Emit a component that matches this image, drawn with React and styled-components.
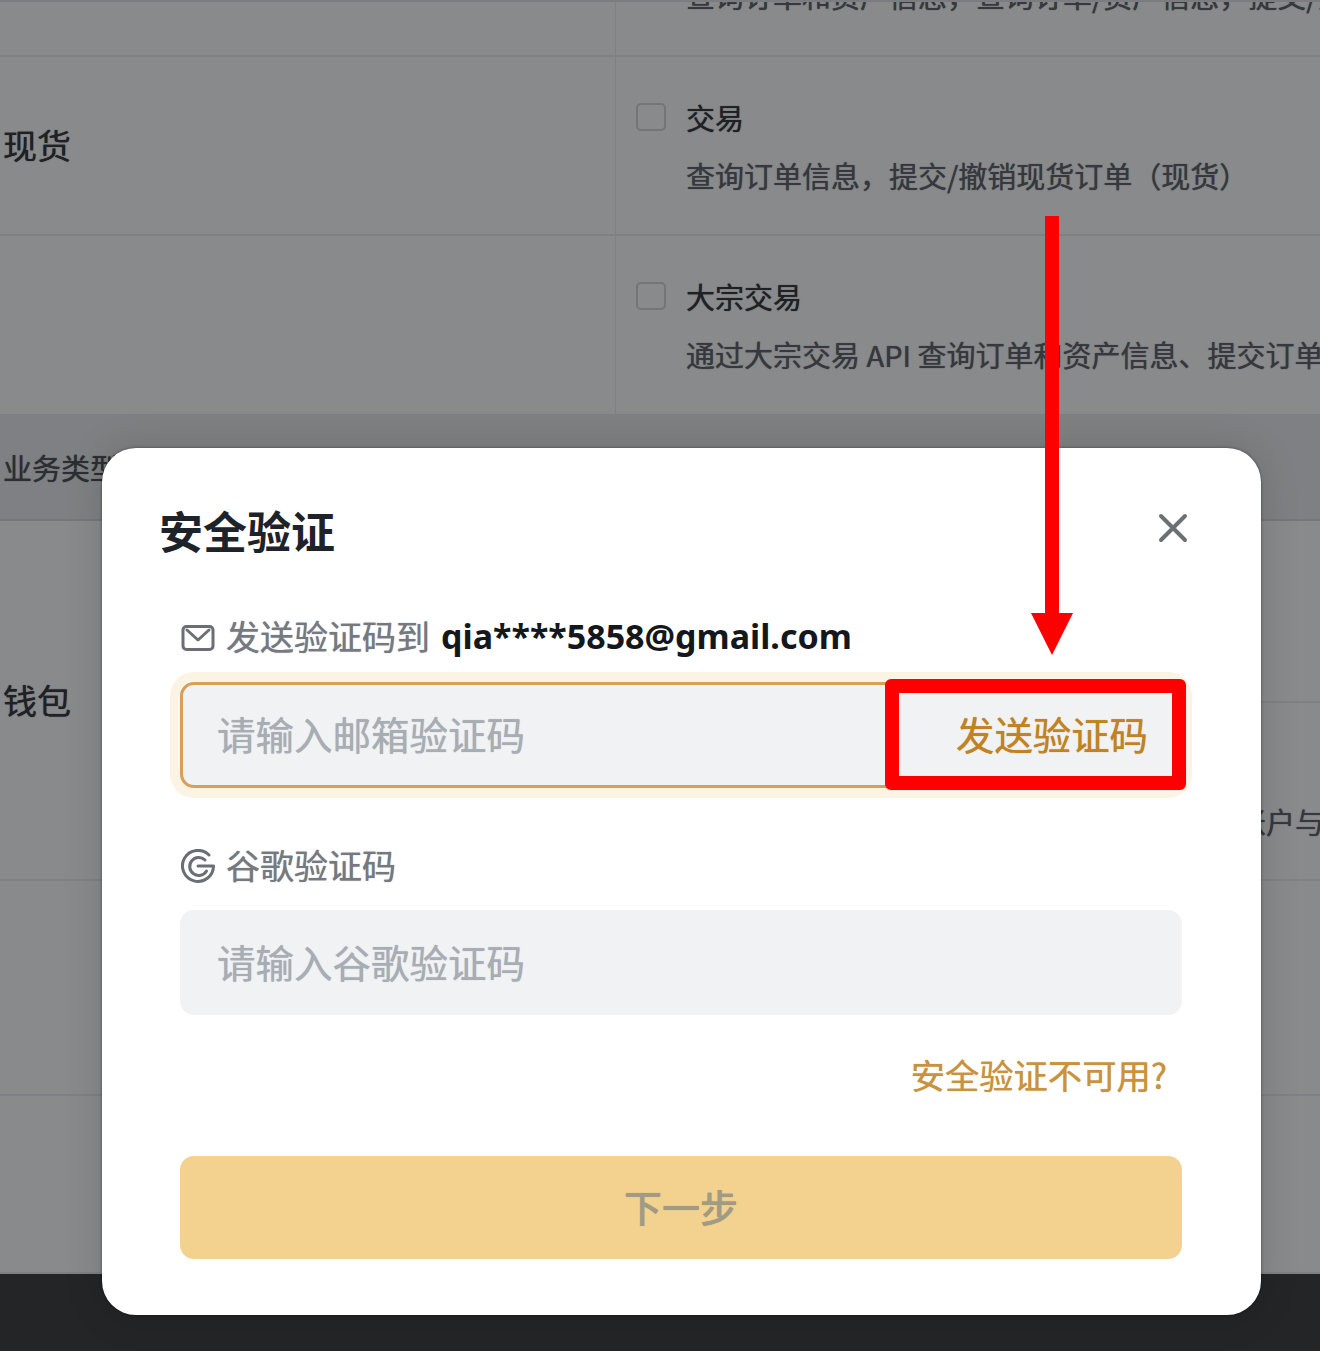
import React from "react";
import styled, { createGlobalStyle, css } from "styled-components";

const GlobalStyle = createGlobalStyle`
  html, body {
    margin: 0;
    padding: 0;
    background: #232527;
  }
  body {
    font-family: "Noto Sans CJK SC", "Noto Sans", sans-serif;
  }
  * {
    box-sizing: border-box;
  }
`;

// the source picture is an upscaled capture, so the text sits a little soft and heavy
const softText = css`
  text-shadow: 0 0 1px currentColor;
`;

const Stage = styled.div`
  position: relative;
  width: 1320px;
  height: 1351px;
  overflow: hidden;
`;

// page behind the dialog, already dimmed by the mask
const Table = styled.div`
  height: 1274px;
  background: #898a8c;
  border-top: 2px solid #7b7c7f;
`;

const Row = styled.div`
  display: grid;
  grid-template-columns: 615px 1fr;
  height: ${(p) => p.$height}px;
  border-bottom: 2px solid #7f8083;
  overflow: hidden;
`;

const Band = styled.div`
  display: flex;
  align-items: center;
  height: 105px;
  padding: 0 0 2px 3px;
  background: #7f8083;
  border-bottom: 2px solid #76777b;
  font-size: 29px;
  color: #2c2e32;
  ${softText}
`;

const NameCell = styled.div`
  display: flex;
  align-items: center;
  padding: 0 0 2px 3px;
  font-size: 34px;
  line-height: 1;
  color: #1f2125;
  ${softText}
`;

const ValueCell = styled.div`
  border-left: 1px solid #7f8083;
  min-width: 0;
`;

const Permission = styled.div`
  display: grid;
  grid-template-columns: 30px 1fr;
  grid-auto-rows: 58px;
  column-gap: 20px;
  height: ${(p) => p.$height || 178}px;
  padding: 31px 0 0 20px;
  & + & {
    border-top: 2px solid #7f8083;
  }
`;

const Check = styled.span`
  width: 30px;
  height: 28px;
  margin-top: 15px;
  border: 2px solid #737578;
  border-radius: 5px;
`;

const PermissionName = styled.div`
  font-size: 29px;
  line-height: 58px;
  color: #1f2125;
  white-space: nowrap;
  ${softText}
`;

const PermissionText = styled.div`
  grid-column: 2;
  font-size: 29px;
  line-height: 58px;
  color: #36383d;
  white-space: nowrap;
  ${softText}
`;

const ClippedText = styled(PermissionText)`
  margin: -36px 0 0 70px;
`;

const Footer = styled.div`
  height: 77px;
  background: #232527;
`;

const Modal = styled.div`
  position: absolute;
  left: 102px;
  top: 448px;
  width: 1159px;
  height: 867px;
  background: #fff;
  border-radius: 34px;
  box-shadow: 0 0 3px rgba(0, 0, 0, 0.45), 0 0 40px rgba(0, 0, 0, 0.14);
`;

const Header = styled.div`
  display: flex;
  align-items: center;
  justify-content: space-between;
  padding: 58px 70px 0 57px;
`;

const Title = styled.h2`
  margin: -2px 0 2px;
  font-size: 44px;
  line-height: 52px;
  font-weight: 700;
  color: #1e2329;
`;

const CloseIcon = styled.svg`
  width: 36px;
  height: 36px;
  margin-top: -8px;
  fill: none;
  stroke: #6c7075;
  stroke-width: 4;
  stroke-linecap: round;
`;

const Body = styled.div`
  padding: 56px 79px 0 78px;
`;

const FieldLabel = styled.div`
  display: flex;
  align-items: center;
  gap: 11px;
  height: 46px;
  padding-left: 1px;
  font-size: 34px;
  color: #767a80;
`;

const LabelText = styled.span`
  margin-bottom: 4px;
  ${softText}
`;

const LabelIcon = styled.svg`
  flex: none;
  width: 34px;
  height: 34px;
  fill: none;
  stroke: #6b6f75;
  stroke-width: 3;
  stroke-linecap: round;
  stroke-linejoin: round;
`;

const Email = styled.strong`
  margin-bottom: 2px;
  font-family: "Noto Sans", sans-serif;
  font-size: 34px;
  font-weight: 700;
  color: #14171b;
`;

const Field = styled.div`
  position: relative;
  display: flex;
  align-items: center;
  justify-content: space-between;
  height: ${(p) => (p.$focused ? 106 : 105)}px;
  margin: ${(p) => (p.$focused ? "22px 0 55px" : "21px 0 0")};
  padding: 0 31px 4px ${(p) => (p.$focused ? 34 : 37)}px;
  background: #f1f2f4;
  border-radius: 14px;
  border: ${(p) => (p.$focused ? "3px solid #d79f57" : "none")};
  box-shadow: ${(p) => (p.$focused ? "0 0 0 10px #fbf3e3" : "none")};
`;

const Placeholder = styled.span`
  font-size: 38.5px;
  color: #a8acb3;
  ${softText}
`;

const SendCode = styled.span`
  font-size: 38.4px;
  color: #bf8225;
  ${softText}
`;

const Callout = styled.div`
  position: absolute;
  top: -6px;
  right: -7px;
  width: 301px;
  height: 111px;
  border: 14px solid #ff0000;
  border-radius: 6px;
`;

const CalloutArrow = styled.svg`
  position: absolute;
  left: 1031px;
  top: 216px;
  width: 42px;
  height: 439px;
  fill: #ff0000;
`;

const HelpLink = styled.div`
  margin-top: 37px;
  padding: 0 15px 2px 0;
  font-size: 34.3px;
  line-height: 44px;
  text-align: right;
  color: #c8923f;
  ${softText}
`;

const NextButton = styled.button`
  display: block;
  width: 100%;
  height: 103px;
  margin-top: 58px;
  padding: 0 0 4px;
  border: none;
  border-radius: 14px;
  background: #f3d28f;
  font-family: inherit;
  font-size: 38px;
  font-weight: 500;
  color: #a19a84;
  ${softText}
`;

function MailIcon() {
  return (
    <LabelIcon viewBox="0 0 34 34">
      <rect x="2" y="6.5" width="30" height="23" rx="3.5" />
      <path d="M6 10 17 20 28 10" />
    </LabelIcon>
  );
}

function GoogleAuthIcon() {
  return (
    <LabelIcon viewBox="0 0 34 34">
      <path d="M28 6A15.5 15.5 0 1 0 32.5 17H17" />
      <path d="M24 11A9 9 0 1 0 25.5 22" />
    </LabelIcon>
  );
}

export default function App() {
  return (
    <Stage>
      <GlobalStyle />
      <Table>
        <Row $height={55}>
          <div />
          <ValueCell>
            <ClippedText>查询订单和资产信息，查询订单/资产信息，提交/撤销</ClippedText>
          </ValueCell>
        </Row>
        <Row $height={179}>
          <NameCell>现货</NameCell>
          <ValueCell>
            <Permission>
              <Check />
              <PermissionName>交易</PermissionName>
              <PermissionText>查询订单信息，提交/撤销现货订单（现货）</PermissionText>
            </Permission>
          </ValueCell>
        </Row>
        <Row $height={180}>
          <div />
          <ValueCell>
            <Permission>
              <Check />
              <PermissionName>大宗交易</PermissionName>
              <PermissionText>通过大宗交易 API 查询订单和资产信息、提交订单</PermissionText>
            </Permission>
          </ValueCell>
        </Row>
        <Band>业务类型</Band>
        <Row $height={360}>
          <NameCell>钱包</NameCell>
          <ValueCell>
            <Permission $height={180} />
            <Permission $height={180}>
              <Check />
              <PermissionName>划转</PermissionName>
              <PermissionText>查询钱包账户余额信息，提交划转至钱包子账户与</PermissionText>
            </Permission>
          </ValueCell>
        </Row>
        <Row $height={215} />
        <Row $height={178} />
      </Table>
      <Footer />

      <Modal>
        <Header>
          <Title>安全验证</Title>
          <CloseIcon viewBox="0 0 36 36">
            <path d="M6 6 30 30M30 6 6 30" />
          </CloseIcon>
        </Header>
        <Body>
          <FieldLabel>
            <MailIcon />
            <LabelText>发送验证码到</LabelText>
            <Email>qia****5858@gmail.com</Email>
          </FieldLabel>
          <Field $focused>
            <Placeholder>请输入邮箱验证码</Placeholder>
            <SendCode>发送验证码</SendCode>
            <Callout />
          </Field>
          <FieldLabel>
            <GoogleAuthIcon />
            <LabelText>谷歌验证码</LabelText>
          </FieldLabel>
          <Field>
            <Placeholder>请输入谷歌验证码</Placeholder>
          </Field>
          <HelpLink>安全验证不可用?</HelpLink>
          <NextButton>下一步</NextButton>
        </Body>
      </Modal>

      <CalloutArrow viewBox="0 0 42 439">
        <path d="M14 0H28V397H42L21 439 0 397H14Z" />
      </CalloutArrow>
    </Stage>
  );
}
